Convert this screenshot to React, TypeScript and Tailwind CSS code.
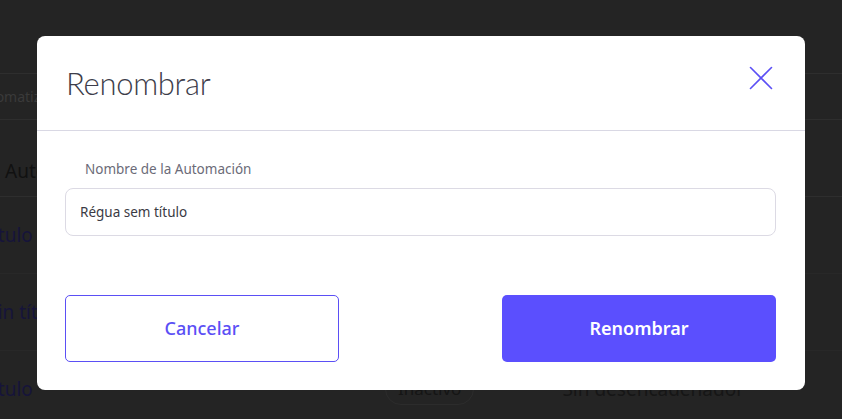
import React, { useState } from 'react';

const rows = [
  { name: 'Régua sem título', shift: '-ml-[118px]' },
  { name: 'Régua sin título', shift: '-ml-[73px]' },
  { name: 'Régua sem título', shift: '-ml-[118px]' },
];

export default function App() {
  const [name, setName] = useState('Régua sem título');

  return (
    <div className="relative w-[842px] h-[419px] overflow-hidden bg-[#242424] font-['Noto_Sans','Lato',sans-serif]">
      {/* Page behind the dialog (already dimmed) */}
      <div className="flex flex-col pt-[73px]">
        <div className="h-[47px] border-y border-[#2e2e2e] flex items-center">
          <span className="-ml-[27px] text-[14px] text-[#3a3a3a]">Automatización</span>
        </div>
        <div className="h-[77px] border-b border-[#2e2e2e] flex items-center pt-[27px]">
          <span className="ml-[5px] text-[19px] text-[#111111]">Automatizaciones</span>
        </div>
        {rows.map((row, i) => (
          <div key={i} className="h-[77px] border-b border-[#282828] flex items-center">
            <div className="w-[60px] shrink-0 whitespace-nowrap">
              <span className={`${row.shift} inline-block text-[19px] text-[#16143a]`}>{row.name}</span>
            </div>
            <span className="ml-[325px] px-3 py-0.5 rounded-full border border-[#2c2c2c] text-[17px] text-[#151515]">
              Inactivo
            </span>
            <span className="ml-[88px] text-[19px] text-[#161616]">Sin desencadenador</span>
          </div>
        ))}
      </div>

      {/* Dialog */}
      <div className="absolute left-[37px] top-[36px] w-[768px] h-[354px] bg-white rounded-[8px] flex flex-col">
        <div className="h-[95px] border-b border-[#d9d8e4] flex items-center justify-between pl-[29px] pr-[32px] pt-[1px]">
          <h2 className="font-['Lato',sans-serif] text-[31px] font-light text-[#3d3d4a] tracking-[-0.3px]">Renombrar</h2>
          <button className="-mt-[11px] w-[24px] h-[24px] flex items-center justify-center">
            <svg width="24" height="24" viewBox="0 0 24 24" fill="none" stroke="#5b4ff5" strokeWidth="1.6" strokeLinecap="round">
              <path d="M1.5 1.5L22.5 22.5M22.5 1.5L1.5 22.5" />
            </svg>
          </button>
        </div>

        <div className="flex flex-col pl-[28px] pr-[29px] pt-[32px]">
          <label className="pl-[20px] text-[13.5px] text-[#6b6b78] leading-none">Nombre de la Automación</label>
          <input
            value={name}
            onChange={(e) => setName(e.target.value)}
            className="mt-[11px] h-[48px] w-full rounded-[8px] border border-[#dcdae4] px-[14px] text-[13.5px] text-[#3a3a44] outline-none"
          />
        </div>

        <div className="flex justify-between pl-[28px] pr-[29px] mt-[59px]">
          <button className="w-[274px] h-[67px] rounded-[5px] border border-[#5b4ff5] text-[18px] font-medium text-[#5b4ff5]">
            Cancelar
          </button>
          <button className="w-[274px] h-[67px] rounded-[5px] bg-[#5b4ffe] text-[18px] font-semibold text-white">
            Renombrar
          </button>
        </div>
      </div>
    </div>
  );
}
